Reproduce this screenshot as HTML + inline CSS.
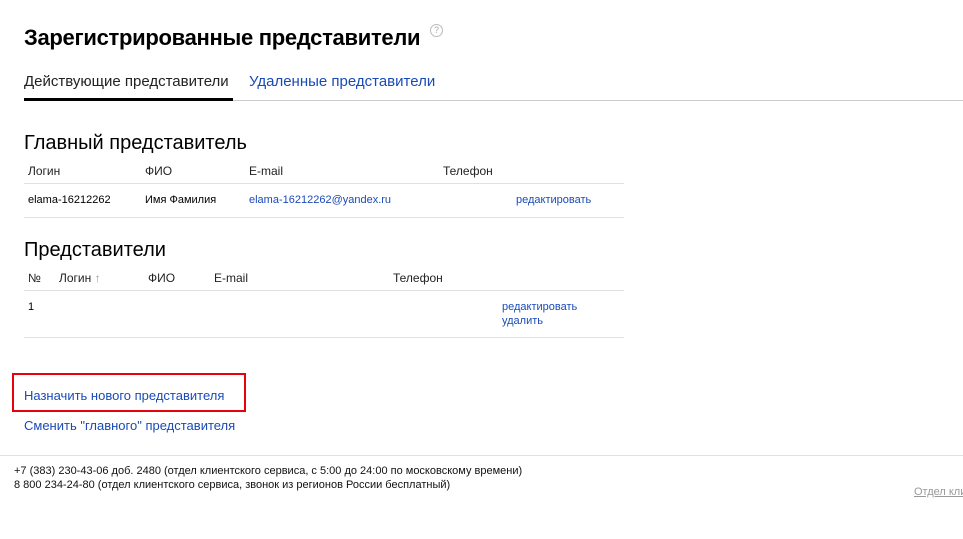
<!DOCTYPE html><html><head><meta charset="utf-8"><style>
body{margin:0;width:963px;height:539px;overflow:hidden;background:#fff;font-family:"Liberation Sans",sans-serif;color:#000;position:relative}
.a{position:absolute;white-space:nowrap}
.l{color:#1a4ab8}
.line{position:absolute;height:1px;background:#e0e0e0}
.s12{font-size:12px}.s11{font-size:11px}.s13{font-size:13px}
</style></head><body>
<div class="a" style="left:24px;top:25px;font-size:22px;font-weight:bold;letter-spacing:-0.3px">Зарегистрированные представители</div>
<div class="a" style="left:430px;top:24px;width:11px;height:11px;border:1px solid #bbb;border-radius:50%;font-size:9px;color:#aaa;text-align:center;line-height:11px">?</div>
<div class="a" style="left:24px;top:73px;font-size:15px;color:#222">Действующие представители</div>
<div class="a l" style="left:249px;top:73px;font-size:15px">Удаленные представители</div>
<div class="line" style="left:24px;top:100px;width:939px;background:#ccc"></div>
<div class="a" style="left:24px;top:98px;width:209px;height:3px;background:#000"></div>
<div class="a" style="left:24px;top:132px;font-size:20px">Главный представитель</div>
<div class="a s12" style="left:28px;top:164px;color:#222">Логин</div>
<div class="a s12" style="left:145px;top:164px;color:#222">ФИО</div>
<div class="a s12" style="left:249px;top:164px;color:#222">E-mail</div>
<div class="a s12" style="left:443px;top:164px;color:#222">Телефон</div>
<div class="line" style="left:24px;top:183px;width:600px"></div>
<div class="a s11" style="left:28px;top:194px">elama-16212262</div>
<div class="a s11" style="left:145px;top:194px">Имя Фамилия</div>
<div class="a s11 l" style="left:249px;top:194px">elama-16212262@yandex.ru</div>
<div class="a s11 l" style="left:516px;top:194px">редактировать</div>
<div class="line" style="left:24px;top:217px;width:600px"></div>
<div class="a" style="left:24px;top:239px;font-size:20px">Представители</div>
<div class="a s12" style="left:28px;top:271px;color:#222">№</div>
<div class="a s12" style="left:59px;top:271px;color:#222">Логин <span style="color:#999">↑</span></div>
<div class="a s12" style="left:148px;top:271px;color:#222">ФИО</div>
<div class="a s12" style="left:214px;top:271px;color:#222">E-mail</div>
<div class="a s12" style="left:393px;top:271px;color:#222">Телефон</div>
<div class="line" style="left:24px;top:290px;width:600px"></div>
<div class="a s11" style="left:28px;top:301px">1</div>
<div class="a s11 l" style="left:502px;top:301px">редактировать</div>
<div class="a s11 l" style="left:502px;top:315px">удалить</div>
<div class="line" style="left:24px;top:337px;width:600px"></div>
<div class="a" style="left:12px;top:373px;width:230px;height:35px;border:2px solid #e8000b"></div>
<div class="a s13 l" style="left:24px;top:388px">Назначить нового представителя</div>
<div class="a s13 l" style="left:24px;top:418px">Сменить "главного" представителя</div>
<div class="line" style="left:0;top:455px;width:963px"></div>
<div class="a s11" style="left:14px;top:465px;color:#111">+7 (383) 230-43-06 доб. 2480 (отдел клиентского сервиса, с 5:00 до 24:00 по московскому времени)</div>
<div class="a s11" style="left:14px;top:479px;color:#111">8 800 234-24-80 (отдел клиентского сервиса, звонок из регионов России бесплатный)</div>
<div class="a s11" style="left:914px;top:486px;color:#999;text-decoration:underline">Отдел клиентского</div>
</body></html>
